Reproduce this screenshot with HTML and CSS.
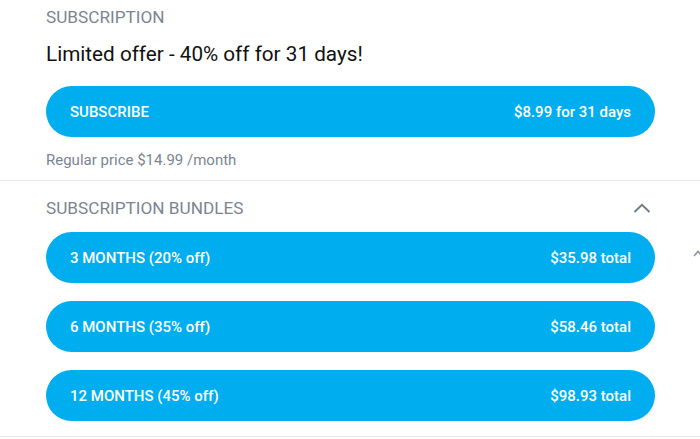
FILE: index.html
```html
<!DOCTYPE html>
<html lang="en">
<head>
	<meta charset="UTF-8">
	<title>Subscription</title>
	<link rel="stylesheet" href="styles.css">
</head>
<body>
	<div class="section first">
		<h2 class="label">SUBSCRIPTION</h2>
		<p class="offer">Limited offer - 40% off for 31 days!</p>
		<button class="plan main"><span>SUBSCRIBE</span><span>$8.99 for 31 days</span></button>
		<p class="regular">Regular price $14.99 /month</p>
	</div>
	<div class="section bundles">
		<div class="head">
			<h2 class="label">SUBSCRIPTION BUNDLES</h2>
			<svg class="chev" width="18" height="10" viewBox="0 0 18 10"><path d="M1.5 9 L9 1.8 L16.5 9" fill="none" stroke="#6f7983" stroke-width="1.8"/></svg>
		</div>
		<div class="list">
			<button class="plan"><span>3 MONTHS (20% off)</span><span>$35.98 total</span></button>
			<button class="plan"><span>6 MONTHS (35% off)</span><span>$58.46 total</span></button>
			<button class="plan"><span>12 MONTHS (45% off)</span><span>$98.93 total</span></button>
		</div>
		<svg class="edge" width="10" height="10" viewBox="0 0 10 10"><path d="M1 8 L5 3.5 L9 8" fill="none" stroke="#8a939c" stroke-width="1.5"/></svg>
	</div>
</body>
</html>
```

FILE: styles.css
```css
*{padding: 0; margin: 0; box-sizing: border-box;}
body{
	width: 700px;
	height: 439px;
	overflow: hidden;
	background: #fff;
	font-family: Roboto, "Liberation Sans", sans-serif;
	color: #111;
}
.section{
	padding: 7px 45px 10px 46px;
	border-bottom: 1px solid #e6e7e8;
	position: relative;
}
.label{
	font-size: 17.2px;
	line-height: 20px;
	font-weight: 400;
	color: #7b8590;
}
.offer{
	margin-top: 13px;
	font-size: 20.7px;
	line-height: 28px;
}
.plan{
	display: flex;
	justify-content: space-between;
	align-items: center;
	width: 100%;
	height: 51px;
	padding: 0 24px;
	border: 0;
	border-radius: 26px;
	background: #00aeef;
	color: #fff;
	font-family: inherit;
	font-size: 15px;
	font-weight: 500;
}
.main{
	margin-top: 18px;
}
.regular{
	margin-top: 13px;
	font-size: 15px;
	line-height: 20px;
	color: #7b8590;
}
.bundles{
	padding-top: 17px;
	padding-bottom: 15px;
}
.head{
	display: flex;
	justify-content: space-between;
	align-items: center;
}
.chev{
	margin-right: 4px;
}
.list{
	margin-top: 14px;
	display: flex;
	flex-direction: column;
	gap: 18px;
}
.edge{
	position: absolute;
	left: 693px;
	top: 67px;
}
```
